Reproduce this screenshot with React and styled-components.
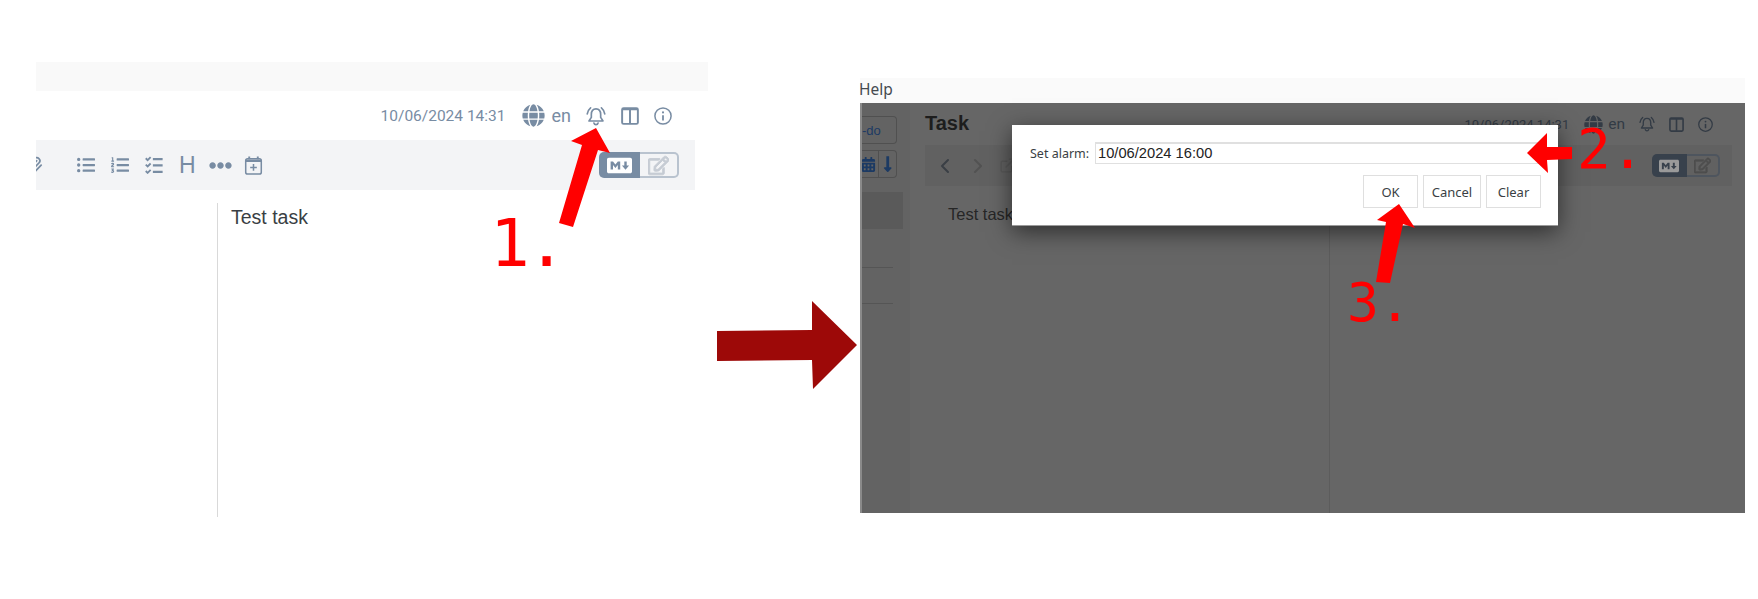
import React from "react";
import styled, { createGlobalStyle } from "styled-components";
import {
  FaGlobe,
  FaListUl,
  FaListOl,
  FaEllipsisH,
  FaMarkdown,
  FaRegEdit,
  FaCalendarAlt,
  FaLongArrowAltDown,
} from "react-icons/fa";
import { ChevronLeft, ChevronRight, ExternalLink, Paperclip } from "lucide-react";

const GlobalStyle = createGlobalStyle`
  html, body { margin: 0; padding: 0; background: #fff; }
  body { font-family: "Liberation Sans", Arial, sans-serif; }
`;

const Page = styled.div`
  position: relative;
  display: flex;
  align-items: flex-start;
  width: 1758px;
  height: 599px;
  overflow: hidden;
  background: #fff;
`;

/* left screenshot */
const LeftShot = styled.div`
  width: 672px;
  margin: 62px 0 0 36px;
`;

const MenuStrip = styled.div`
  height: 29px;
  background: #f9f9f9;
`;

const StatusRow = styled.div`
  display: flex;
  align-items: center;
  justify-content: flex-end;
  height: ${(p) => (p.$dim ? 40 : 49)}px;
  padding-right: ${(p) => (p.$dim ? 32 : 36)}px;
  color: ${(p) => (p.$dim ? "#333b45" : "#788ca3")};
`;

const DateText = styled.span`
  font-family: Roboto, sans-serif;
  font-size: ${(p) => (p.$dim ? 13 : 15.5)}px;
  margin-right: ${(p) => (p.$dim ? 15 : 16)}px;
`;

const LangText = styled.span`
  font-family: Roboto, sans-serif;
  font-size: ${(p) => (p.$dim ? 15.5 : 18)}px;
  margin: 0 ${(p) => (p.$dim ? 14 : 15)}px 0 ${(p) => (p.$dim ? 5 : 7)}px;
`;

const StatusIcons = styled.span`
  display: flex;
  align-items: center;
  gap: ${(p) => (p.$dim ? 14 : 15)}px;
`;

const Toolbar = styled.div`
  display: flex;
  align-items: center;
  width: 659px;
  height: 50px;
  background: #f3f4f6;
  color: #788ca3;
  overflow: hidden;
`;

const ClipSlot = styled.span`
  display: flex;
  justify-content: flex-end;
  width: 7px;
  overflow: hidden;
  margin-right: 34px;
`;

const ToolIcons = styled.div`
  display: flex;
  align-items: center;
  gap: 16px;
`;

const HeadingGlyph = styled.span`
  font-family: "Liberation Sans", sans-serif;
  font-size: 23px;
  line-height: 1;
`;

const DotsSlot = styled.span`
  display: flex;
  margin: 0 -4px 0 -3px;
`;

const Toggle = styled.div`
  display: flex;
  height: ${(p) => (p.$dim ? 23 : 26)}px;
  width: ${(p) => (p.$dim ? 68 : 80)}px;
  margin-left: auto;
  margin-right: ${(p) => (p.$dim ? 12 : 16)}px;
`;

const ToggleSide = styled.span`
  flex: ${(p) => (p.$on ? "0 0 51%" : "1")};
  display: flex;
  align-items: center;
  justify-content: center;
  background: ${(p) => (p.$on ? p.$fill : "transparent")};
  color: ${(p) => (p.$on ? p.$ink : p.$fill)};
  border: ${(p) => (p.$on ? "none" : `2px solid ${p.$line}`)};
  border-left: none;
  border-radius: ${(p) => (p.$on ? "5px 0 0 5px" : "0 5px 5px 0")};

  svg.edit {
    stroke: currentColor;
    stroke-width: 24;
  }
`;

const Editor = styled.div`
  display: flex;
  height: 327px;
  padding-top: 13px;
  box-sizing: border-box;
`;

const EditorPane = styled.div`
  width: 181px;
  border-right: 1px solid #d9d9d9;
  flex-shrink: 0;
`;

const TaskText = styled.div`
  font-size: 19.5px;
  line-height: 26px;
  margin-left: 13px;
  margin-top: 1px;
  color: #3a3f44;
`;

/* connecting arrow */
const BigArrow = styled.svg`
  flex-shrink: 0;
  margin: 301px 3px 0 9px;
`;

/* right screenshot */
const RightShot = styled.div`
  width: 885px;
  margin-top: 78px;
`;

const HelpBar = styled.div`
  height: 25px;
  line-height: 23px;
  text-indent: -1px;
  background: #fafafa;
  font-family: "Noto Sans", sans-serif;
  font-size: 15.5px;
  color: #454a50;
`;

const Dimmed = styled.div`
  display: flex;
  height: 410px;
  box-sizing: border-box;
  background: #666;
  border-left: 2px solid #8a8a8a;
`;

const Sidebar = styled.div`
  width: 48px;
  flex-shrink: 0;
  background: #636363;
  padding-top: 13px;
`;

const SideButton = styled.div`
  display: flex;
  align-items: center;
  width: 35px;
  height: 28px;
  margin-bottom: 6px;
  box-sizing: border-box;
  border: 1px solid #505050;
  border-left: none;
  border-radius: 0 4px 4px 0;
  font-size: 13px;
  color: #1c3a63;
`;

const SideIcon = styled.span`
  display: flex;
  justify-content: center;
  width: ${(p) => p.$w}px;
  height: 100%;
  align-items: center;
  overflow: hidden;
  border-right: ${(p) => (p.$split ? "1px solid #505050" : "none")};
`;

const SideSelected = styled.div`
  width: 41px;
  height: 37px;
  margin-top: 14px;
  background: #5a5a5a;
`;

const SideRule = styled.div`
  width: 31px;
  height: 1px;
  margin-top: ${(p) => p.$gap}px;
  background: #555;
`;

const MainColumn = styled.div`
  flex: 1;
  padding-left: 15px;
  min-width: 0;
`;

const TitleRow = styled.div`
  display: flex;
  align-items: center;
  justify-content: space-between;
  height: 42px;
`;

const Title = styled.div`
  font-size: 20px;
  font-weight: 700;
  color: #1d1d1d;
  margin-top: -2px;
`;

const DimToolbar = styled(Toolbar)`
  width: 807px;
  height: 41px;
  background: #616161;
  color: #3a3f45;
`;

const NavIcons = styled.div`
  display: flex;
  align-items: center;
  gap: 9px;
  margin-left: 8px;
`;

const DimEditor = styled.div`
  display: flex;
  height: 327px;
`;

const DimPane = styled.div`
  width: 404px;
  flex-shrink: 0;
  border-right: 1px solid #5c5c5c;
`;

const DimTask = styled.div`
  font-size: 16.5px;
  line-height: 24px;
  margin: 16px 0 0 23px;
  color: #262626;
`;

/* dialog on top of the dimmed page */
const Dialog = styled.div`
  position: absolute;
  left: 1012px;
  top: 125px;
  width: 546px;
  height: 101px;
  box-sizing: border-box;
  padding: 17px 17px 0 18px;
  background: #fff;
  border-bottom: 1px solid #9a9a9a;
  box-shadow: 0 6px 22px rgba(0, 0, 0, 0.55);
`;

const AlarmRow = styled.div`
  display: flex;
  align-items: center;
  height: 22px;
`;

const AlarmLabel = styled.label`
  width: 65px;
  flex-shrink: 0;
  font-family: "Noto Sans", sans-serif;
  font-size: 12.5px;
  white-space: nowrap;
  color: #3a3f44;
`;

const AlarmInput = styled.div`
  flex: 1;
  height: 22px;
  box-sizing: border-box;
  border: 1px solid #e0e0e0;
  border-top-width: 2px;
  padding-left: 2px;
  font-size: 14.7px;
  line-height: 19px;
  color: #222;
`;

const DialogActions = styled.div`
  display: flex;
  justify-content: flex-end;
  gap: 5px;
  margin-top: 11px;
`;

const DialogButton = styled.button`
  width: ${(p) => p.$w}px;
  height: 33px;
  padding: 0;
  background: #fff;
  border: 1px solid #dfdfdf;
  font-family: "Noto Sans", sans-serif;
  font-size: 13px;
  color: #3a3f44;
`;

/* red annotations */
const Annotations = styled.svg`
  position: absolute;
  left: 0;
  top: 0;
  pointer-events: none;
`;

const StepLabel = styled.span`
  position: absolute;
  left: ${(p) => p.$x}px;
  top: ${(p) => p.$y}px;
  font-family: "DejaVu Sans Mono", monospace;
  font-size: ${(p) => p.$size}px;
  line-height: 1;
  letter-spacing: ${(p) => p.$track}px;
  color: #ff0000;
`;

// hand drawn icons, the packages have no close match for these
const BellIcon = ({ size }) => (
  <svg width={size} height={size} viewBox="0 0 24 24" fill="none" stroke="currentColor" strokeWidth="2" strokeLinecap="round" strokeLinejoin="round">
    <path d="M12 3.5c-3.6 0-5.6 3-5.6 6.8v3.4L3.6 18h16.800l-2.800-4.300v-3.400c0-3.800-2-6.800-5.600-6.800z" />
    <path d="M9.500 20.500a2.600 2.600 0 0 0 5 0" />
    <path d="M1.500 9.500C2 6.500 3.300 4 5.500 2.200M22.500 9.500C22 6.500 20.700 4 18.500 2.200" />
  </svg>
);

const SplitIcon = ({ size }) => (
  <svg width={size} height={size} viewBox="0 0 24 24" fill="none" stroke="currentColor" strokeWidth="2.600">
    <rect x="1.500" y="1.500" width="21" height="21" rx="2" />
    <path d="M12 2v20M2 3h20" />
  </svg>
);

const InfoIcon = ({ size }) => (
  <svg width={size} height={size} viewBox="0 0 24 24" fill="none" stroke="currentColor" strokeWidth="2">
    <circle cx="12" cy="12" r="10.800" />
    <path d="M12 11v7" strokeWidth="2.400" />
    <circle cx="12" cy="7.200" r="1.400" fill="currentColor" stroke="none" />
  </svg>
);

const ChecklistIcon = ({ size }) => (
  <svg width={size} height={size} viewBox="0 0 24 24" fill="none" stroke="currentColor" strokeWidth="2.400">
    <path d="M1 3l2.500 2.500L7.500 1.500M1 11.500L3.500 14l4-4M1 20l2.500 2.500 4-4" />
    <path d="M10.500 4h13M10.500 12.500h13M10.500 21h13" strokeWidth="3" />
  </svg>
);

const CalendarPlusIcon = ({ size }) => (
  <svg width={size} height={size} viewBox="0 0 20 20" fill="none" stroke="currentColor" strokeWidth="1.600">
    <rect x="1.800" y="3" width="16.400" height="16" rx="2" />
    <path d="M1.800 5h16.400" strokeWidth="2.600" />
    <path d="M5.500 0.500v3M14.500 0.500v3" strokeWidth="2" />
    <path d="M10 8.500v7M6.500 12h7" />
  </svg>
);

const Status = ({ dim }) => (
  <>
    <DateText $dim={dim}>10/06/2024 14:31</DateText>
    <FaGlobe size={dim ? 19 : 23} />
    <LangText $dim={dim}>en</LangText>
    <StatusIcons $dim={dim}>
      <BellIcon size={dim ? 16 : 20} />
      <SplitIcon size={dim ? 15 : 18} />
      <InfoIcon size={dim ? 15 : 18} />
    </StatusIcons>
  </>
);

const ViewToggle = ({ dim }) => {
  const fill = dim ? "#38414c" : "#788ca3";
  const ink = dim ? "#9a9a9a" : "#fff";
  return (
    <Toggle $dim={dim}>
      <ToggleSide $on $fill={fill} $ink={ink}>
        <FaMarkdown size={dim ? 20 : 25} />
      </ToggleSide>
      <ToggleSide $fill={dim ? "#4e4e4e" : "#c6ccd4"} $line={dim ? "#4e555e" : "#b9c3cf"}>
        <FaRegEdit className="edit" size={dim ? 17 : 21} />
      </ToggleSide>
    </Toggle>
  );
};

export default function App() {
  return (
    <Page>
      <GlobalStyle />

      <LeftShot>
        <MenuStrip />
        <StatusRow>
          <Status />
        </StatusRow>
        <Toolbar>
          <ClipSlot>
            <Paperclip size={19} strokeWidth={2.2} style={{ flexShrink: 0 }} />
          </ClipSlot>
          <ToolIcons>
            <FaListUl size={18} />
            <FaListOl size={18} />
            <ChecklistIcon size={18} />
            <HeadingGlyph>H</HeadingGlyph>
            <DotsSlot>
              <FaEllipsisH size={23} />
            </DotsSlot>
            <CalendarPlusIcon size={19} />
          </ToolIcons>
          <ViewToggle />
        </Toolbar>
        <Editor>
          <EditorPane />
          <TaskText>Test task</TaskText>
        </Editor>
      </LeftShot>

      <BigArrow width="140" height="88" viewBox="0 0 140 88">
        <polygon points="0,30 95,29 95,0 140,44 96,88 95,59 0,60" fill="#9d0908" />
      </BigArrow>

      <RightShot>
        <HelpBar>Help</HelpBar>
        <Dimmed>
          <Sidebar>
            <SideButton>-do</SideButton>
            <SideButton>
              <SideIcon $w={16} $split>
                <FaCalendarAlt size={15} style={{ marginLeft: -3 }} />
              </SideIcon>
              <SideIcon $w={18}>
                <FaLongArrowAltDown size={18} />
              </SideIcon>
            </SideButton>
            <SideSelected />
            <SideRule $gap={38} />
            <SideRule $gap={35} />
          </Sidebar>
          <MainColumn>
            <TitleRow>
              <Title>Task</Title>
              <StatusRow $dim>
                <Status dim />
              </StatusRow>
            </TitleRow>
            <DimToolbar>
              <NavIcons>
                <ChevronLeft size={24} />
                <ChevronRight size={24} color="#525252" />
                <ExternalLink size={17} color="#585858" />
              </NavIcons>
              <ViewToggle dim />
            </DimToolbar>
            <DimEditor>
              <DimPane>
                <DimTask>Test task</DimTask>
              </DimPane>
            </DimEditor>
          </MainColumn>
        </Dimmed>
      </RightShot>

      <Dialog>
        <AlarmRow>
          <AlarmLabel>Set alarm:</AlarmLabel>
          <AlarmInput>10/06/2024 16:00</AlarmInput>
        </AlarmRow>
        <DialogActions>
          <DialogButton $w={55}>OK</DialogButton>
          <DialogButton $w={58}>Cancel</DialogButton>
          <DialogButton $w={55}>Clear</DialogButton>
        </DialogActions>
      </Dialog>

      <Annotations width="1758" height="599" viewBox="0 0 1758 599">
        <polygon points="596,128 571,141 582,145 559,223 573,227 598,150 610,153" fill="#ff0000" />
        <polygon points="1527,153 1547,133 1547,147 1572,147 1572,159 1547,160 1548,173" fill="#ff0000" />
        <polygon points="1399,204 1377,220 1386,222 1376,282 1390,283 1403,224 1415,228" fill="#ff0000" />
      </Annotations>
      <StepLabel $x={490} $y={211} $size={66} $track={-3}>1.</StepLabel>
      <StepLabel $x={1577} $y={121} $size={56} $track={0}>2.</StepLabel>
      <StepLabel $x={1347} $y={276} $size={53} $track={0}>3.</StepLabel>
    </Page>
  );
}
